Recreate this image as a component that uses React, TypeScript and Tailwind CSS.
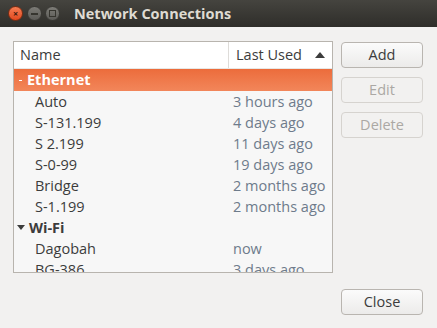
const rows: { name: string; when: string }[] = [
  { name: 'Auto', when: '3 hours ago' },
  { name: 'S-131.199', when: '4 days ago' },
  { name: 'S 2.199', when: '11 days ago' },
  { name: 'S-0-99', when: '19 days ago' },
  { name: 'Bridge', when: '2 months ago' },
  { name: 'S-1.199', when: '2 months ago' },
]

const wifi = [
  { name: 'Dagobah', when: 'now' },
  { name: 'BG-386', when: '3 days ago' },
]

function Row({ name, when }: { name: string; when: string }) {
  return (
    <div className="flex h-[21px] items-center shrink-0">
      <div className="w-[215px] pl-[21px] text-[#3c3c3c]">{name}</div>
      <div className="pl-[4px] text-[#6e7b8b]">{when}</div>
    </div>
  )
}

function Btn({ label, disabled }: { label: string; disabled?: boolean }) {
  return (
    <button
      className={
        disabled
          ? 'h-[26px] w-[82px] rounded-[4px] border border-[#d6d3cf] bg-[#f2f1f0] text-[#aba8a4]'
          : 'h-[26px] w-[82px] rounded-[4px] border border-[#b9b5b0] bg-gradient-to-b from-[#fbfbfb] to-[#ecebea] text-[#3c3c3c]'
      }
    >
      {label}
    </button>
  )
}

export default function App() {
  return (
    <div
      className="w-[437px] h-[328px] bg-[#f2f1f0] flex flex-col text-[14.5px] overflow-hidden"
      style={{ fontFamily: '"Open Sans", "Noto Sans", sans-serif' }}
    >
      <div className="h-[27px] shrink-0 bg-gradient-to-b from-[#45443f] to-[#2f2e2a] flex items-center pl-[8px]">
        <div className="w-[15px] h-[15px] rounded-full bg-gradient-to-b from-[#f37c52] to-[#e2481c] border border-[#7b2c12] flex items-center justify-center text-[#3a1a0e] text-[9px] font-bold leading-none">
          ×
        </div>
        <div className="ml-[4px] w-[15px] h-[15px] rounded-full bg-gradient-to-b from-[#7c7b76] to-[#5c5b57] border border-[#3a3935] flex items-center justify-center">
          <div className="w-[7px] h-[2px] bg-[#36352f]" />
        </div>
        <div className="ml-[3px] w-[15px] h-[15px] rounded-full bg-gradient-to-b from-[#7c7b76] to-[#5c5b57] border border-[#3a3935] flex items-center justify-center">
          <div className="w-[7px] h-[7px] border-[1.5px] border-[#36352f]" />
        </div>
        <div className="ml-[14px] text-[#dfdbd2] font-bold text-[14.5px]">Network Connections</div>
      </div>

      <div className="flex pt-[14px] pl-[13px]">
        <div className="w-[320px] h-[232px] border border-[#b8b4ae] bg-[#f7f7f7] flex flex-col overflow-hidden">
          <div className="h-[27px] shrink-0 bg-white flex items-center border-b border-[#e8e7e5]">
            <div className="w-[215px] h-full flex items-center pl-[6px] border-r border-[#dedcd9] text-[#3c3c3c]">Name</div>
            <div className="flex-1 flex items-center pl-[7px] text-[#3c3c3c]">
              Last Used
              <svg width="10" height="6" viewBox="0 0 10 6" className="ml-[13px]">
                <path d="M0 6 L5 0 L10 6 Z" fill="#3c3c3c" />
              </svg>
            </div>
          </div>
          <div className="h-[22px] shrink-0 bg-gradient-to-b from-[#ec6c3b] to-[#f2865a] flex items-center text-white font-bold">
            <div className="w-[3px] h-[1px] bg-white ml-[5px] mr-[5px]" />
            Ethernet
          </div>
          {rows.map(r => (
            <Row key={r.name} {...r} />
          ))}
          <div className="h-[21px] shrink-0 flex items-center font-bold text-[#3c3c3c]">
            <svg width="8" height="5" viewBox="0 0 8 5" className="ml-[3px] mr-[4px]">
              <path d="M0 0 L8 0 L4 5 Z" fill="#3c3c3c" />
            </svg>
            Wi-Fi
          </div>
          {wifi.map(r => (
            <Row key={r.name} {...r} />
          ))}
        </div>
        <div className="ml-[8px] flex flex-col gap-[9px] pt-[1px]">
          <Btn label="Add" />
          <Btn label="Edit" disabled />
          <Btn label="Delete" disabled />
        </div>
      </div>

      <div className="flex justify-end pr-[14px] pt-[16px]">
        <Btn label="Close" />
      </div>
    </div>
  )
}
